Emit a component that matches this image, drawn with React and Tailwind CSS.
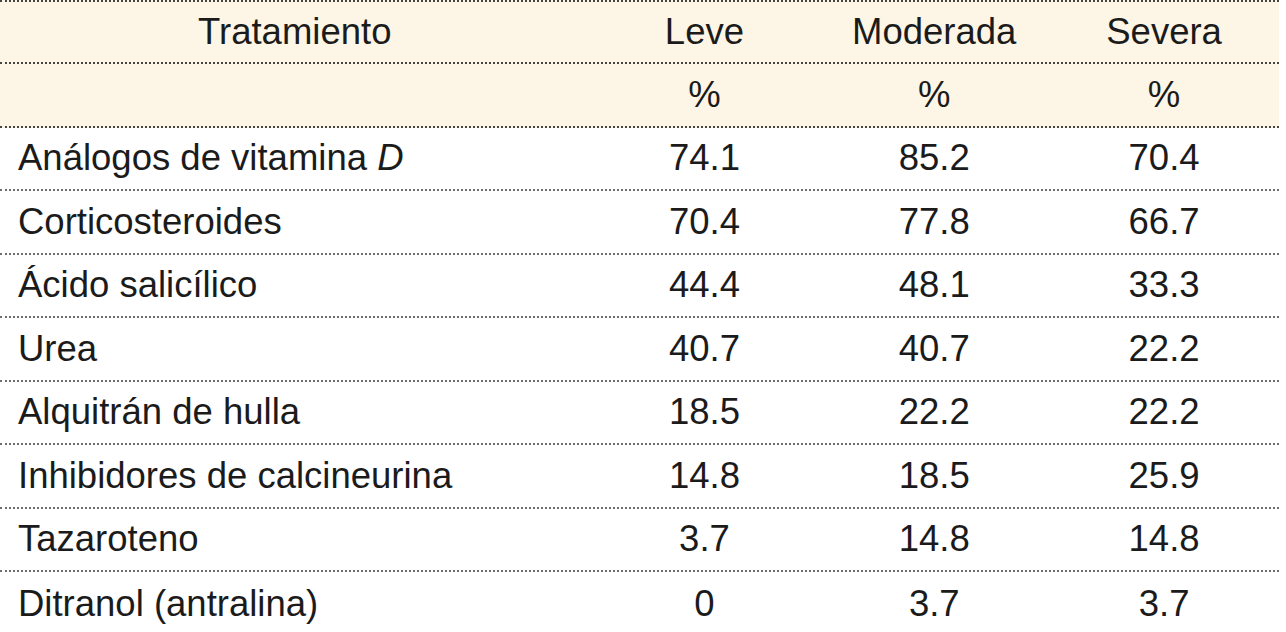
const COLS = ['Leve', 'Moderada', 'Severa'];

const ROWS = [
  { name: <>Análogos de vitamina <i>D</i></>, v: ['74.1', '85.2', '70.4'] },
  { name: 'Corticosteroides', v: ['70.4', '77.8', '66.7'] },
  { name: 'Ácido salicílico', v: ['44.4', '48.1', '33.3'] },
  { name: 'Urea', v: ['40.7', '40.7', '22.2'] },
  { name: 'Alquitrán de hulla', v: ['18.5', '22.2', '22.2'] },
  { name: 'Inhibidores de calcineurina', v: ['14.8', '18.5', '25.9'] },
  { name: 'Tazaroteno', v: ['3.7', '14.8', '14.8'] },
  { name: 'Ditranol (antralina)', v: ['0', '3.7', '3.7'] },
];

export default function App() {
  return (
    <div
      className="w-[1286px] h-[632px] overflow-hidden bg-white text-[#1b1b1b] text-[36.5px] leading-none"
      style={{ fontFamily: '"Liberation Sans", Arial, sans-serif' }}
    >
      <div className="w-[1279px]">
        {/* header */}
        <div className="flex h-[64px] items-center bg-[#fdf6e6] border-t-2 border-b-2 border-dotted border-[#444]">
          <div className="w-[590px] text-center">Tratamiento</div>
          {COLS.map((c) => (
            <div key={c} className="w-[230px] text-center">{c}</div>
          ))}
        </div>
        <div className="flex h-[63.5px] items-center bg-[#fdf6e6] border-b-2 border-dotted border-[#444]">
          <div className="w-[590px]" />
          {COLS.map((c) => (
            <div key={c} className="w-[230px] text-center">%</div>
          ))}
        </div>

        {ROWS.map((r, i) => (
          <div
            key={i}
            className={
              i < ROWS.length - 1
                ? 'flex h-[63.5px] items-center border-b-2 border-dotted border-[#6e6e6e]'
                : 'flex h-[63.5px] items-center'
            }
          >
            <div className="w-[590px] pl-[18px]">{r.name}</div>
            {r.v.map((x, j) => (
              <div key={j} className="w-[230px] text-center">{x}</div>
            ))}
          </div>
        ))}
      </div>
    </div>
  );
}
